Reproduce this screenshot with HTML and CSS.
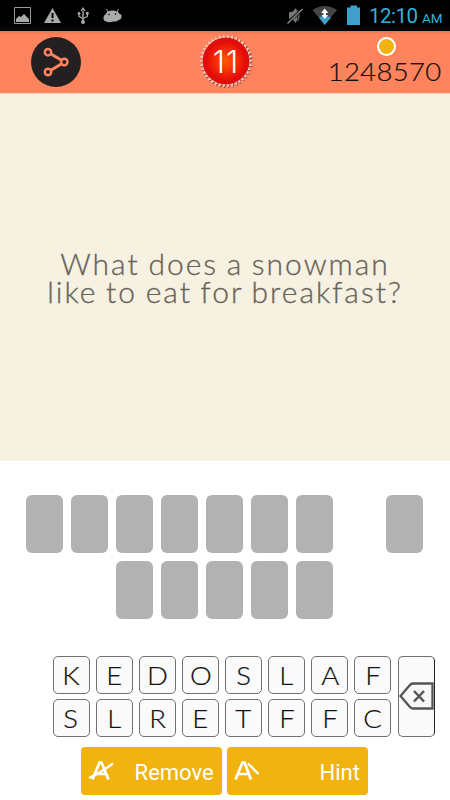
FILE: index.html
```html
<!DOCTYPE html>
<html lang="en">
<head>
  <meta charset="UTF-8">
  <meta name="viewport" content="width=device-width, initial-scale=1.0">
  <title>Riddle Quiz</title>
  <link rel="stylesheet" href="styles.css">
</head>
<body>
  <div class="screen">
    <!-- Status Bar -->
    <div class="status-bar">
      <svg class="status-icons" width="125" height="31" viewBox="0 0 125 31">
        <g fill="#aaa">
          <path d="M14.5 7.5h16v16h-16z" fill="none" stroke="#999"/>
          <path d="M16 22v-3l3-3 2 1 3-3 5 5v3z"/>
          <path d="M52.5 8L61 23H44z"/>
          <path d="M51.5 13h2v5h-2zM51.5 19.5h2v2h-2z" fill="#000"/>
          <path d="M83 7l-2.5 4h5zM82.3 10h1.4v12h-1.4z"/>
          <circle cx="83" cy="22" r="2"/>
          <circle cx="79" cy="13.5" r="1.4"/>
          <path d="M86 12h2.6v2.6H86z"/>
          <path d="M79 14v2.3l4 2.5M87.4 14v2.5l-4 2" fill="none" stroke="#aaa" stroke-width="1.2"/>
          <path d="M105.500 14.500Q107 10.500 112.500 10.500T119.500 14Q122 14 121.500 17T118.500 20Q117 22 113.500 21.500Q109 23 106 21.500Q103 20.500 103.500 17.500T105.500 14.500z"/>
          <path d="M108 12l-1.500-3M117 12l1.500-3" stroke="#aaa"/>
          <circle cx="109" cy="14.500" r=".8" fill="#000"/>
          <circle cx="115.500" cy="14" r=".8" fill="#000"/>
        </g>
      </svg>
      <div class="status-right">
        <svg width="80" height="31" viewBox="285 0 80 31">
          <path d="M289 12h3l4-4q3 8 0 15l-4-4h-3z" fill="#777"/>
          <path d="M297.500 10q3 5.500 0 11" fill="none" stroke="#666" stroke-width="1.300"/>
          <path d="M287.500 23L302.500 9" stroke="#000" stroke-width="3"/>
          <path d="M287.500 23.500L302.500 9" stroke="#888" stroke-width="1.500"/>
          <path d="M312.500 10Q324.500 2 337 10L324.700 25z" fill="#444"/>
          <path d="M319 17.500l3-1.500 2.500 2 2.500-2 4 1.500L324.700 25z" fill="#3ba1c9"/>
          <path d="M324.700 8.500l3.600 4.500h-2.300v2h2l-3.300 4-3.300-4h2v-2h-2.300z" fill="#fff"/>
          <path d="M347 7.500h3.500V5.500h6.500v2h3V25h-13z" fill="#3f9fc8"/>
        </svg>
        <span class="clock">12:10</span>
        <span class="meridiem">AM</span>
      </div>
    </div>

    <!-- Top Bar -->
    <div class="top-bar">
      <svg class="share" width="50" height="50" viewBox="0 0 50 50">
        <circle cx="25" cy="25" r="25" fill="#242021"/>
        <path d="M17 15.200L33.500 25 17 35" fill="none" stroke="#ff835c" stroke-width="3"/>
        <g fill="#242021" stroke="#ff835c" stroke-width="2.500">
          <circle cx="17" cy="15.200" r="3.200"/>
          <circle cx="33.300" cy="25" r="3.200"/>
          <circle cx="17" cy="35" r="3.200"/>
        </g>
      </svg>

      <div class="level">
        <svg width="54" height="54" viewBox="-27 -27 54 54">
          <defs>
            <radialGradient id="glow">
              <stop offset="0" stop-color="#ff5a00"/>
              <stop offset="0.85" stop-color="#e60a0a"/>
              <stop offset="1" stop-color="#d81410"/>
            </radialGradient>
          </defs>
          <polygon class="burst-shadow" transform="translate(0.7 0.8)"/>
          <polygon class="burst"/>
          <circle r="23.500" fill="url(#glow)"/>
        </svg>
        <span class="level-number">11</span>
      </div>

      <div class="coins">
        <span class="coin"></span>
        <span class="coin-count">1248570</span>
      </div>
    </div>

    <!-- Question -->
    <div class="question">What does a snowman<br>like to eat for breakfast?</div>

    <!-- Answer Slots -->
    <div class="answer">
      <div class="slots">
        <i class="slot"></i><i class="slot"></i><i class="slot"></i><i class="slot"></i><i class="slot"></i><i class="slot"></i><i class="slot"></i><i class="slot blank"></i><i class="slot"></i>
      </div>
      <div class="slots second">
        <i class="slot"></i><i class="slot"></i><i class="slot"></i><i class="slot"></i><i class="slot"></i>
      </div>
    </div>

    <!-- Letter Keys -->
    <div class="keyboard">
      <div class="keys">
        <div class="key"><span>K</span></div><div class="key"><span>E</span></div><div class="key"><span>D</span></div><div class="key"><span>O</span></div>
        <div class="key"><span>S</span></div><div class="key"><span>L</span></div><div class="key"><span>A</span></div><div class="key"><span>F</span></div>
        <div class="key"><span>S</span></div><div class="key"><span>L</span></div><div class="key"><span>R</span></div><div class="key"><span>E</span></div>
        <div class="key"><span>T</span></div><div class="key"><span>F</span></div><div class="key"><span>F</span></div><div class="key"><span>C</span></div>
      </div>
      <div class="delete">
        <svg width="35" height="28" viewBox="0 0 35 28">
          <path d="M1.500 14L10.500 3.500Q12 1.500 14 1.500H33.500V26.500H14Q12 26.500 10.500 24.500Z" fill="#f7f7f7" stroke="#555" stroke-width="2.300"/>
          <path d="M15 9l10 10.500M25 9l-10 10.500" stroke="#555" stroke-width="2.500"/>
        </svg>
      </div>
    </div>

    <!-- Actions -->
    <div class="actions">
      <div class="action">
        <svg width="26" height="22" viewBox="0 0 26 22" fill="none" stroke="#fff">
          <path d="M4.500 19.500L11.500 2.500h2L20.500 19.500M7.500 14h10" stroke-width="2.700"/>
          <path d="M1 18Q12 13 25 3.500" stroke-width="2.200"/>
        </svg>
        <span>Remove</span>
      </div>
      <div class="action">
        <svg width="26" height="22" viewBox="0 0 26 22" fill="none" stroke="#fff">
          <path d="M1.500 19.500L8.500 2.500h2L17 19.500M4.500 14h10" stroke-width="2.700"/>
          <path d="M14 3.500L24.500 14" stroke-width="2.400"/>
        </svg>
        <span>Hint</span>
      </div>
    </div>
  </div>

  <script>
    // Toothed edge of the level badge
    const teeth = 38;
    const points = [];
    for (let i = 0; i < teeth * 2; i++) {
      const angle = Math.PI * i / teeth;
      const radius = i % 2 ? 23 : 26.7;
      points.push((Math.cos(angle) * radius).toFixed(2) + ',' + (Math.sin(angle) * radius).toFixed(2));
    }
    document.querySelectorAll('.level polygon').forEach(function(shape) {
      shape.setAttribute('points', points.join(' '));
    });
  </script>
</body>
</html>
```
FILE: styles.css
```css
body {
  margin: 0;
  background-color: #fff;
  font-family: Lato, sans-serif;
}

svg {
  display: block;
}

.screen {
  width: 450px;
  height: 800px;
  overflow: hidden;
}

/* Status Bar */
.status-bar {
  display: flex;
  justify-content: space-between;
  height: 31px;
  background-color: #000;
}

.status-right {
  display: flex;
  align-items: baseline;
  width: 165px;
  color: #35b0de;
  font-family: Roboto, sans-serif;
}

.status-right svg {
  align-self: flex-start;
}

.clock {
  margin-left: 4px;
  width: 50px;
  font-size: 20.5px;
  line-height: 33px;
  letter-spacing: -0.5px;
}

.meridiem {
  margin-left: 3px;
  font-size: 13.5px;
}

/* Top Bar */
.top-bar {
  display: flex;
  box-sizing: border-box;
  height: 63px;
  padding: 0 8px 0 31px;
  background: linear-gradient(#e87652, #ff835c 4px);
  border-bottom: 1px solid #fbd5bd;
}

.share {
  margin-top: 6px;
}

.level {
  display: grid;
  margin: 3px 0 0 118px;
  width: 54px;
  height: 54px;
}

.level svg {
  overflow: visible;
}

.level svg,
.level-number {
  grid-area: 1 / 1;
}

.burst {
  fill: #f5d0c5;
}

.burst-shadow {
  fill: #953d30;
}

.level-number {
  text-align: center;
  color: #fff;
  font-family: Inter, sans-serif;
  font-size: 31px;
  font-weight: 300;
  line-height: 55px;
  letter-spacing: 1px;
}

.coins {
  display: flex;
  flex-direction: column;
  flex: 1;
  align-items: flex-end;
}

.coin {
  box-sizing: border-box;
  width: 19px;
  height: 19px;
  margin: 6px 46px 0 0;
  border: 2px solid #fff;
  border-radius: 50%;
  background-color: #f1b310;
}

.coin-count {
  font-size: 25px;
  line-height: 30px;
  letter-spacing: 0.3px;
  color: #111;
  font-weight: 300;
  transform: scaleX(1.1);
  transform-origin: right;
  -webkit-text-stroke: 0.2px #111;
}

/* Question */
.question {
  box-sizing: border-box;
  height: 367px;
  padding-top: 155px;
  background-color: #f7f1e1;
  color: #666259;
  font-size: 30px;
  font-weight: 300;
  line-height: 28px;
  letter-spacing: 2px;
  word-spacing: -1.5px;
  text-align: center;
  white-space: nowrap;
  -webkit-text-stroke: 0.3px #666259;
}

/* Answer Slots */
.answer {
  height: 195px;
  padding-left: 26px;
  box-sizing: border-box;
  padding-top: 33.5px;
}

.slots {
  display: flex;
  gap: 7.8px;
}

.second {
  margin: 7.5px 0 0 90px;
}

.slot {
  width: 37.2px;
  height: 58.7px;
  border-radius: 6px;
  background-color: #b2b2b2;
}

.blank {
  visibility: hidden;
}

/* Letter Keys */
.keyboard {
  display: flex;
  gap: 6.5px;
  padding-left: 52.5px;
}

.keys {
  display: grid;
  grid-template-columns: repeat(8, 37.3px);
  grid-auto-rows: 37.5px;
  gap: 5.5px 5.8px;
}

.key,
.delete {
  box-sizing: border-box;
  border: 1px solid #707070;
  border-radius: 5px;
  background-color: #fafafa;
}

.key {
  text-align: center;
  font-size: 25px;
  font-weight: 300;
  line-height: 36px;
  color: #111;
  -webkit-text-stroke: 0.2px #111;
}

.key span {
  display: inline-block;
  transform: scaleX(1.1);
}

.delete {
  display: flex;
  align-items: center;
  justify-content: flex-end;
  width: 37.5px;
  height: 80.5px;
  border-right-color: #222;
}

/* Actions */
.actions {
  display: flex;
  gap: 5.5px;
  margin: 10.5px 0 0 81px;
}

.action {
  display: flex;
  align-items: center;
  justify-content: space-between;
  box-sizing: border-box;
  width: 140.7px;
  height: 48px;
  padding: 0 8px 0 7px;
  border-radius: 4px;
  background-color: #f1b310;
  color: #fff;
  font-family: Roboto, sans-serif;
  font-size: 22px;
}

.action span {
  padding-top: 2px;
}
```
